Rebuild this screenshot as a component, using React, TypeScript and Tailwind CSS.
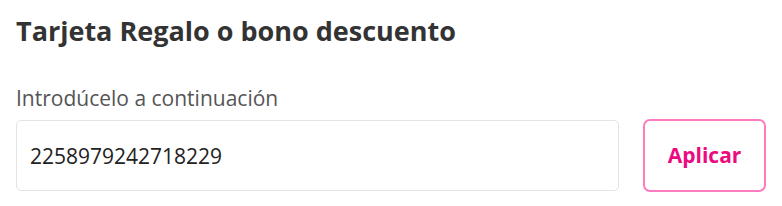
export default function App() {
  return (
    <div className="w-[782px] h-[206px] bg-white font-['Open_Sans',sans-serif] px-4 pt-[13px]">
      <h2 className="text-[27px] leading-[36px] font-bold text-[#333333]">Tarjeta Regalo o bono descuento</h2>
      <label className="block mt-[35px] text-[21px] leading-[28px] text-[#555555]">Introdúcelo a continuación</label>
      <div className="flex items-center gap-6 mt-[7px]">
        <input
          className="w-[604px] h-[71px] border border-[#e3e3e3] rounded-[5px] px-[13px] text-[21px] text-[#222222] outline-none"
          defaultValue="2258979242718229"
        />
        <button className="w-[123px] h-[73px] border-2 border-[#ff7bbd] rounded-[7px] text-[21px] font-bold text-[#ec0a7f] bg-white">
          Aplicar
        </button>
      </div>
    </div>
  );
}
